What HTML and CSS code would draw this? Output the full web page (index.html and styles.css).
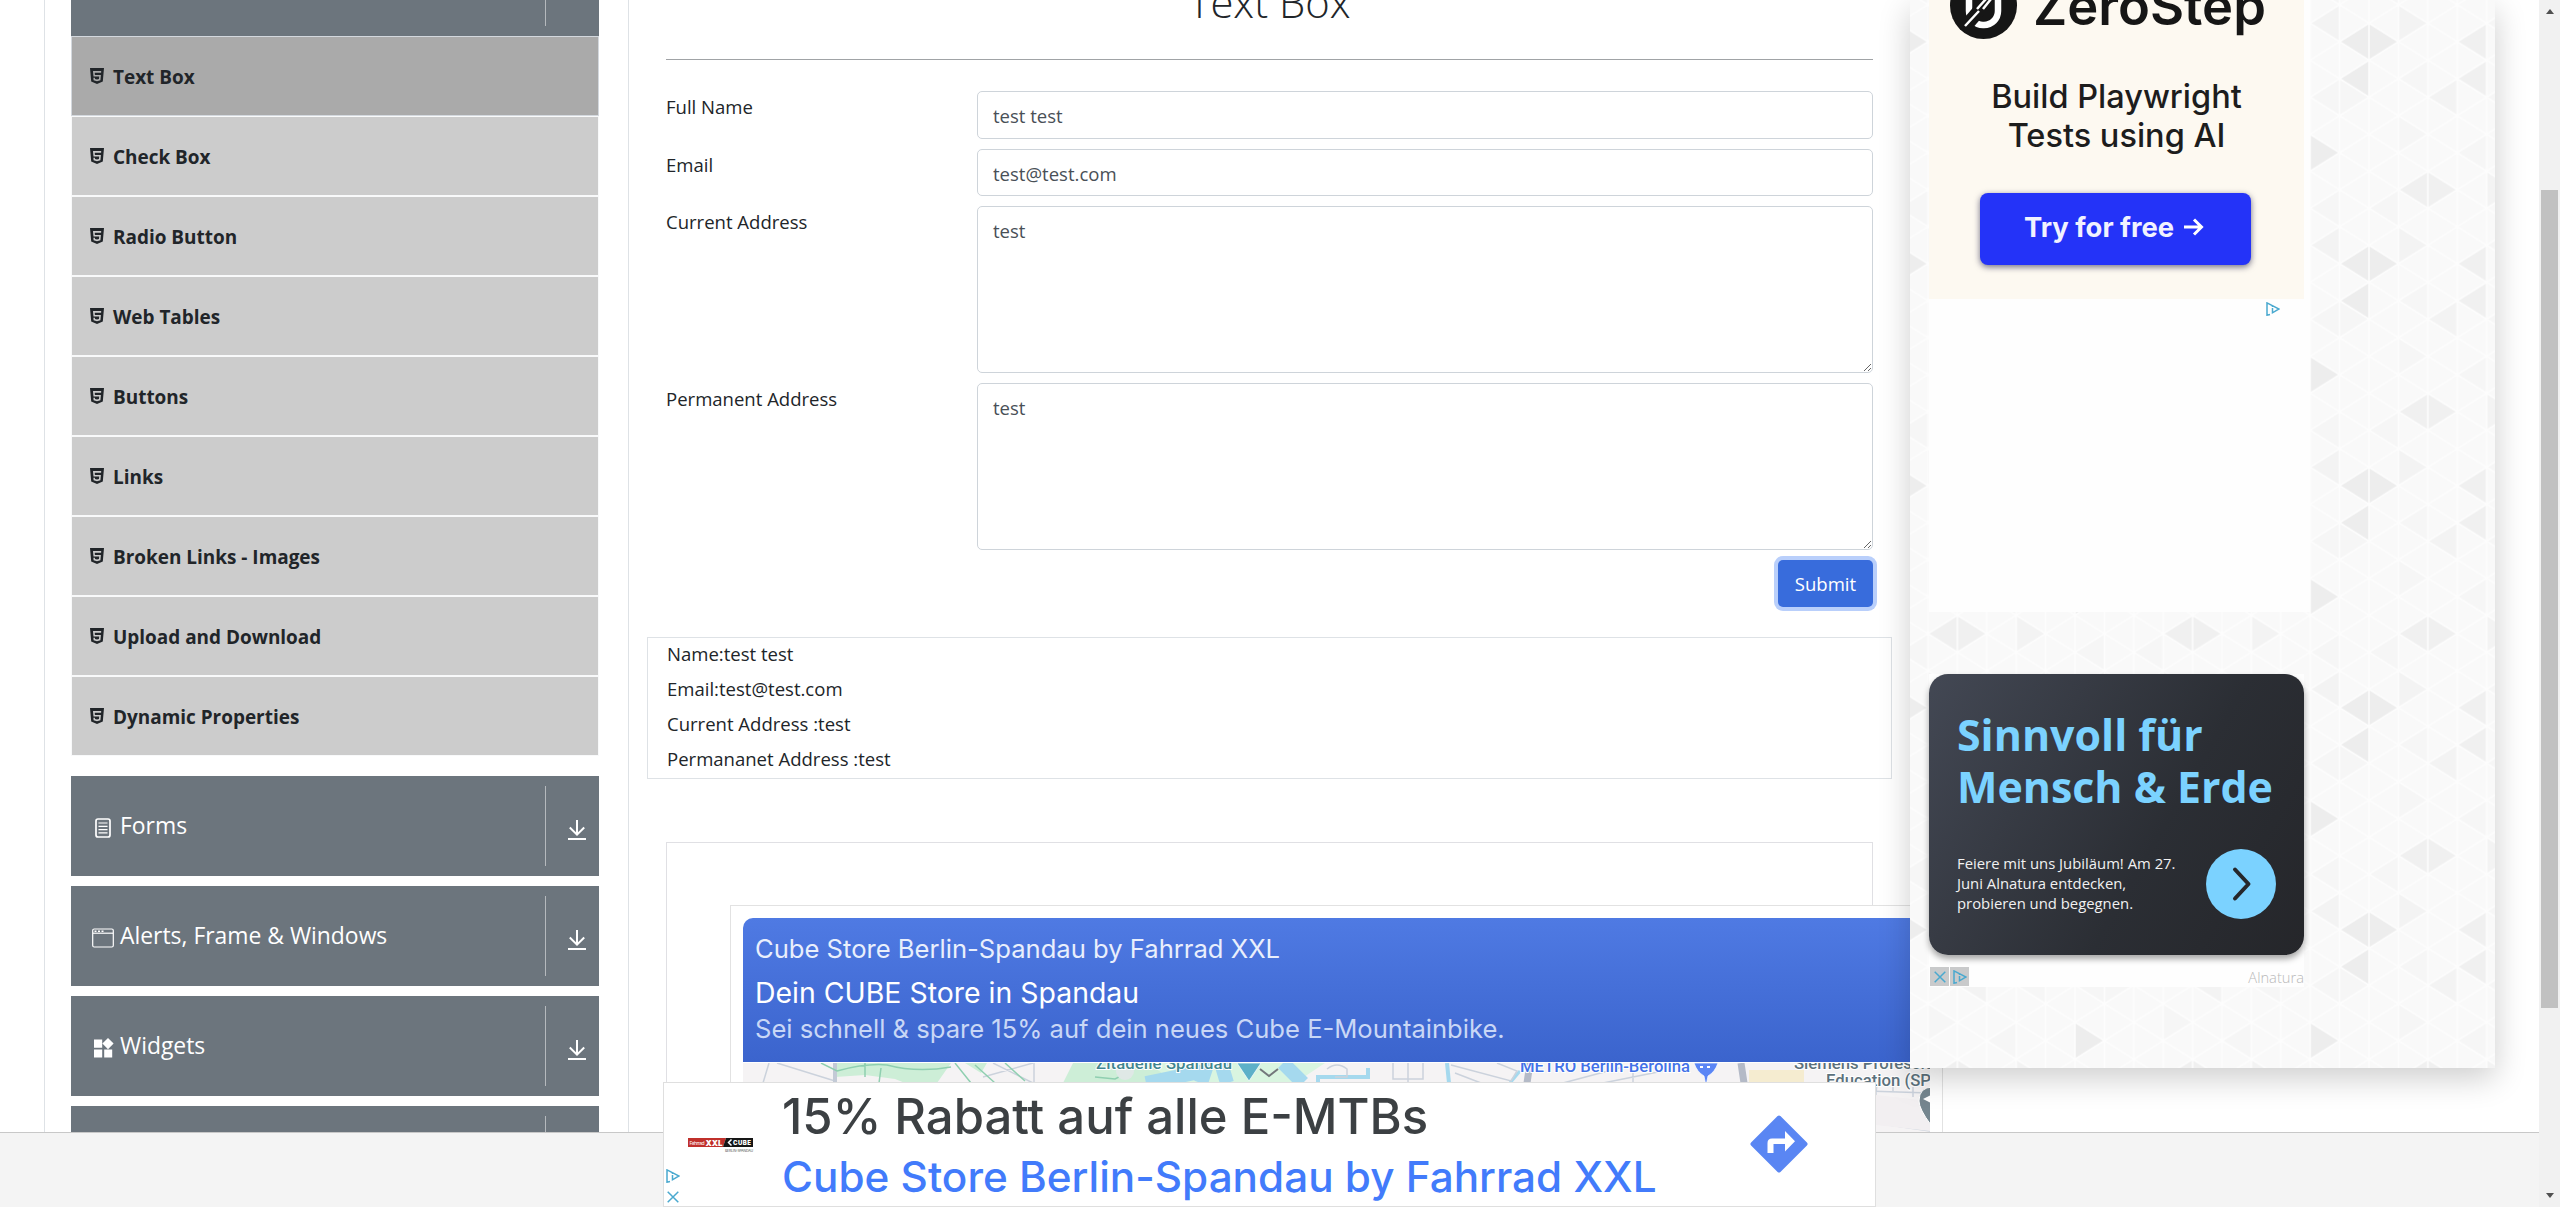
FILE: index.html
```html
<!DOCTYPE html>
<html lang="en">
<head>
<meta charset="utf-8">
<title>Text Box</title>
<link rel="stylesheet" href="styles.css">
</head>
<body>
<svg class="defs" width="0" height="0" aria-hidden="true">
  <symbol id="html5" viewBox="0 0 14 16"><path fill="currentColor" fill-rule="evenodd" d="M0 0h14l-1.2 13.6L7 16l-5.800-2.400zM3 3l.5 5.500h5.700l-.2 2.400-2 .6-2-.6-.1-1.200H3.400l.2 2.500L7 13.300l3.400-1.100.5-5.300H4.900L4.700 4.700h6.400L11.200 3z"/></symbol>
  <symbol id="down" viewBox="0 0 18 20"><path fill="none" stroke="currentColor" stroke-width="2" d="M9 0v14M1.800 7.500 9 14.700l7.200-7.200M0 19h18"/></symbol>
  <symbol id="choices" viewBox="0 0 14 14"><path fill="none" stroke="#4aa9cf" stroke-width="1.500" d="M4 12.500 1 13.200V.9L13 7 6.500 10.800V6M6.500 3.800v1.200"/></symbol>
  <symbol id="cross" viewBox="0 0 12 12"><path fill="none" stroke="#4aa9cf" stroke-width="1.500" d="m.7.7 10.600 10.600M11.300.7.7 11.300"/></symbol>
</svg>

<div class="page">
  <nav class="sidebar">
    <div class="group first"><span class="toggle"></span></div>
    <ul class="items">
      <li class="item active"><svg><use href="#html5"/></svg><span>Text Box</span></li>
      <li class="item"><svg><use href="#html5"/></svg><span>Check Box</span></li>
      <li class="item"><svg><use href="#html5"/></svg><span>Radio Button</span></li>
      <li class="item"><svg><use href="#html5"/></svg><span>Web Tables</span></li>
      <li class="item"><svg><use href="#html5"/></svg><span>Buttons</span></li>
      <li class="item"><svg><use href="#html5"/></svg><span>Links</span></li>
      <li class="item"><svg><use href="#html5"/></svg><span>Broken Links - Images</span></li>
      <li class="item"><svg><use href="#html5"/></svg><span>Upload and Download</span></li>
      <li class="item"><svg><use href="#html5"/></svg><span>Dynamic Properties</span></li>
    </ul>
    <div class="group">
      <svg class="gi" viewBox="0 0 22 22"><rect x="4" y="2" width="14" height="18" rx="2" fill="none" stroke="#fff" stroke-width="1.700"/><path stroke="#fff" stroke-width="1.200" d="M6.500 6h9M6.500 9.300h9M6.500 12.600h9M6.500 15.900h9"/></svg>
      <span class="label">Forms</span><span class="toggle"><svg><use href="#down"/></svg></span>
    </div>
    <div class="group">
      <svg class="gi" viewBox="0 0 22 22"><rect x=".7" y="2" width="20.600" height="18" rx="1.500" fill="none" stroke="#fff" stroke-width="1.200"/><path stroke="#fff" stroke-width="1.200" d="M1 6.200h20"/><path stroke="#fff" stroke-width="1.500" stroke-dasharray="2 1.500" d="M2.500 4.200h9"/></svg>
      <span class="label">Alerts, Frame &amp; Windows</span><span class="toggle"><svg><use href="#down"/></svg></span>
    </div>
    <div class="group">
      <svg class="gi" viewBox="0 0 22 22"><path fill="#fff" d="M2 2.500h8.200v8.200H2zM2 12.500h8.200v8H2zM12.200 12.500h8v8h-8zM16 1l5.600 5.600L16 12.200l-5.600-5.600z"/></svg>
      <span class="label">Widgets</span><span class="toggle"><svg><use href="#down"/></svg></span>
    </div>
    <div class="group"><span class="toggle"></span></div>
  </nav>

  <main class="main">
    <h1>Text Box</h1>
    <form class="form">
      <label for="name">Full Name</label><input id="name" class="name" value="test test">
      <label for="mail">Email</label><input id="mail" value="test@test.com">
      <label for="cur">Current Address</label><textarea id="cur">test</textarea>
      <label for="per">Permanent Address</label><textarea id="per">test</textarea>
      <button type="button">Submit</button>
    </form>
    <div class="output">
      <p>Name:test test</p>
      <p>Email:test@test.com</p>
      <p>Current Address :test</p>
      <p>Permananet Address :test</p>
    </div>
    <div class="slot">
      <div class="slot-inner">
        <div class="store">
          <p class="s1">Cube Store Berlin-Spandau by Fahrrad XXL</p>
          <p class="s2">Dein CUBE Store in Spandau</p>
          <p class="s3">Sei schnell &amp; spare 15% auf dein neues Cube E-Mountainbike.</p>
        </div>
        <svg class="map" width="1187" height="72" viewBox="0 0 1187 72">
          <rect width="1187" height="72" fill="#f5f3f4"/>
          <path fill="#cdeed7" d="M92 0h116l-14 20-22 4-20-8-30-4-30 2zM222 0h22l-6 10zM330 0h40l10 20h-60zM324 14l8 4-12 4z"/>
          <path fill="#d9f5e0" d="M400 0h182l-30 20H420z"/>
          <path fill="#cdeed7" d="M356 20q10-22 34-18 24-4 36 18z"/>
          <g fill="none" stroke="#a5d9ee" stroke-width="8"><path d="M403 20 462 8l-4 12M478 0l6 20M540 0l20 20" stroke-width="14"/><path d="M575 20v-6h50V5" stroke-width="4"/><path d="m704 0 2 20" stroke-width="4"/><path d="m767 20 10-12" stroke-width="3"/></g>
          <g fill="none" stroke="#cbd2dc" stroke-width="1.500"><path d="M26 0 20 20M34 0l58 18M250 0l40 20M240 14l50-14M291 0v20M650 0v16h30V0M665 0v20M584 6q10-8 20 0v8h-12M708 2l60 16 6-10-20-8M712 10l26 10M820 20l60-16M860 20l60-12M890 8v12"/></g>
          <path stroke="#c3cad6" stroke-width="4" d="M92 0v20"/>
          <path stroke="#b4bac7" stroke-width="7" d="m787 0-3 20M998 0l3 20"/>
          <g fill="none" stroke="#8fcfb0" stroke-width="1.500"><path d="M78 0 94 8q30-8 50-6 30 8 64 2M122 0v14M138 5l-2 15M212 0l16 20M232 2l20 18M262 0l20 18M352 14l20 2 16-8"/></g>
          <circle cx="382" cy="8" r="9" fill="#dfe8e6"/>
          <path fill="#f5ecd0" d="M1006 7h55v13h-55z"/>
          <path fill="#5db0c8" stroke="#fff" stroke-width=".7" d="M494 0h24l-12 18z"/>
          <path fill="none" stroke="#73777b" stroke-width="2" d="m517 6 9 7 9-7"/>
          <path fill="#5a85f5" stroke="#fff" stroke-width=".7" d="M951 0h24q-3 9-10 13l-2 10-2-10q-7-4-10-13z"/>
          <path fill="#fff" d="M957 3h3v2h-3zM964 3h3v2h-3z"/>
          <path fill="none" stroke="#cbd2dc" stroke-width="1.500" d="M1132 60 1187 68M1132 42l2-22M1060 26l127 4M1150 14v14M1170 24v10M1100 34l87 10"/>
          <path fill="#f2eff1" d="M1133 32 1187 38v30l-54-6z"/>
          <path fill="#75868f" stroke="#fff" d="M1190 24q-14 0-14 14 0 8 12 24z"/><path fill="#fff" d="m1180 36 10-5v10z"/>
          <g class="mapt">
            <text x="353" y="6" fill="#41868f" textLength="136">Zitadelle Spandau</text>
            <text x="777" y="8.500" fill="#4272e8" textLength="170">METRO Berlin-Berolina</text>
            <text x="1051" y="6" fill="#5c717c">Siemens Professional</text>
            <text x="1083" y="23" fill="#5c717c">Education (SPE)</text>
          </g>
        </svg>
      </div>
    </div>
  </main>

  <aside class="rail">
    <svg class="pattern" width="585" height="1068">
      <defs>
        <pattern id="tri" width="235.200" height="222" patternUnits="userSpaceOnUse" patternTransform="translate(106.200 4.700)">
          <rect width="235.200" height="222" fill="#f9f9f9"/>
          <path fill="#ededed" d="M88.200 37l29.400-18.500L147 37l-29.400 18.500zM88.200 148l-29.400-18.500v37zM88.200 74l29.400-18.500v37z"/>
          <path fill="#f0f0f0" d="M205.800 37l29.400-18.500v37zM205.800 74l29.400-18.500v37zM147 185l29.400-18.500 29.400 18.500-29.400 18.500z"/>
          <path fill="#f3f3f3" d="M176.400 92.500l29.400-18.500v37zM176.400 18.500L147 0v37zM29.400 185L0 166.500v37zM58.800 18.500l29.400-18.500v37z"/>
          <path fill="#f6f6f6" d="M0 92.500L29.400 74v37zM58.800 92.500L88.200 74l29.400 18.500L88.200 111zM176.400 129.500L147 111v37zM117.600 203.500l29.400-18.500v37zM205.800 148l29.400-18.500v37zM0 18.500L29.400 0v37zM147 74l29.400-18.500v37zM88.200 222l-29.400-18.500 29.400-18.500z"/>
          <path fill="none" stroke="#fdfdfd" stroke-width="1.600" d="M0 0v222M29.400 0v222M58.800 0v222M88.200 0v222M117.600 0v222M147 0v222M176.400 0v222M205.800 0v222M235.200 0v222
          M0 -129.500L235.200 18.500M0 -92.500L235.200 55.500M0 -55.500L235.200 92.500M0 -18.500L235.200 129.500M0 18.500L235.200 166.500M0 55.500L235.200 203.500M0 92.500L235.200 240.500M0 129.500L235.200 277.500M0 166.500L235.200 314.500M0 203.500L235.200 351.500
          M0 18.500L235.200 -129.500M0 55.500L235.200 -92.500M0 92.500L235.200 -55.500M0 129.500L235.200 -18.500M0 166.500L235.200 18.500M0 203.500L235.200 55.500M0 240.500L235.200 92.500M0 277.500L235.200 129.500M0 314.500L235.200 166.500M0 351.500L235.200 203.500"/>
        </pattern>
      </defs>
      <rect width="585" height="1068" fill="url(#tri)"/>
    </svg>
    <div class="zs-slot">
      <div class="zs">
        <div class="zs-brand">
          <svg width="67" height="67" viewBox="0 0 67 67"><circle cx="33.500" cy="33.500" r="33.500" fill="#161616"/><rect x="19" y="10" width="29" height="43" rx="14" fill="none" stroke="#fff" stroke-width="6.500"/><path stroke="#161616" stroke-width="13" d="m15 55 24-28"/><path stroke="#fff" stroke-width="2.500" d="m15 54 14-15M27 37l9-10M33 37l8-10"/></svg>
          <span>ZeroStep</span>
        </div>
        <p class="zs-text">Build Playwright<br>Tests using AI</p>
        <div class="zs-btn">Try for free <svg width="20" height="20" viewBox="0 0 20 20"><path fill="none" stroke="#fff" stroke-width="3" d="M0 10h17M10 2.500l7.500 7.500-7.500 7.500"/></svg></div>
      </div>
      <svg class="zs-choice" width="14" height="14"><use href="#choices"/></svg>
    </div>
    <div class="aln-slot">
      <div class="aln">
        <p class="aln-title">Sinnvoll für<br>Mensch &amp; Erde</p>
        <div class="aln-row">
          <p>Feiere mit uns Jubiläum! Am 27.<br>Juni Alnatura entdecken,<br>probieren und begegnen.</p>
          <svg width="70" height="70" viewBox="0 0 70 70"><circle cx="35" cy="35" r="35" fill="#7bd2ff"/><path fill="none" stroke="#25272b" stroke-width="4" stroke-linecap="round" stroke-linejoin="round" d="m29 20.500 13.500 14.500L29 49.500"/></svg>
        </div>
      </div>
      <div class="aln-foot">
        <span class="chip"><svg width="12" height="12"><use href="#cross"/></svg></span><span class="chip"><svg width="14" height="14"><use href="#choices"/></svg></span>
        <span class="adv">Alnatura</span>
      </div>
    </div>
  </aside>
</div>
<footer class="footer"></footer>

<div class="anchor">
  <div class="anchor-left">
    <svg class="logo" width="66" height="15" viewBox="0 0 66 15"><path fill="#c0302b" d="M0 0h38l-3 9H0z"/><path fill="#161616" d="M38 0h27v9H35z"/><text x="1.500" y="7" font-size="5" fill="#fff" textLength="15">Fahrrad</text><text x="17.500" y="7.500" font-size="8" font-weight="900" fill="#fff" textLength="17">XXL</text><text x="45" y="6.800" font-size="6" font-weight="900" fill="#fff" textLength="18">CUBE</text><path fill="none" stroke="#fff" stroke-width="1.500" d="m43.500 1.500-3 3 3 3"/><text x="37" y="13.500" font-size="3.500" fill="#555" textLength="28">BERLIN-SPANDAU</text></svg>
    <svg class="a1" width="14" height="14"><use href="#choices"/></svg>
    <svg class="a2" width="12" height="12"><use href="#cross"/></svg>
  </div>
  <div class="anchor-text">
    <p class="a-title">15% Rabatt auf alle E-MTBs</p>
    <p class="a-sub">Cube Store Berlin-Spandau by Fahrrad XXL</p>
  </div>
  <svg class="dir" width="58" height="58" viewBox="0 0 58 58"><path fill="#5a86f3" stroke="#5a86f3" stroke-width="4" stroke-linejoin="round" d="M29 2.500 55.500 29 29 55.500 2.500 29z"/><path fill="#fff" d="M17.500 38V28q0-4.500 4.500-4.500h13V16l10 10.300-10 10.200V29H23.500v9z"/></svg>
</div>

<div class="scroll"><i class="up"></i><i class="thumb"></i><i class="dn"></i></div>
</body>
</html>
```
FILE: styles.css
```css
* { box-sizing: border-box; margin: 0; padding: 0; }
html, body { height: 1207px; overflow: hidden; background: #fff; }
body { position: relative; font: 18.55px/30px "Open Sans", "Noto Sans", sans-serif; color: #212529; }
svg { display: block; flex: none; }
.defs { position: absolute; }
.page { display: flex; height: 1132px; overflow: hidden; align-items: flex-start; }

/* sidebar */
.sidebar { flex: none; width: 585px; height: 1132px; margin-left: 44px; padding: 0 29px 0 26px; border: solid #dee2e6; border-width: 0 1px; overflow: hidden; }
.group { display: flex; align-items: center; height: 100px; margin-bottom: 10px; padding-left: 21px; background: #6c757d; color: #fff; font-size: 22.9px; }
.group.first { height: 36px; margin: 0; align-items: flex-start; }
.group.first .toggle { height: 26px; }
.gi { width: 22px; height: 22px; margin-top: 4px; }
.label { margin: 0 0 0 6px; }
.toggle { display: flex; align-items: center; width: 54px; height: 80px; margin-left: auto; padding: 7px 0 0 22px; border-left: 1px solid #b5b9bd; }
.toggle svg { width: 18px; height: 20px; }
.items { list-style: none; margin-bottom: 20px; }
.item { display: flex; align-items: center; height: 80px; padding-left: 18px; border: 1px solid #f8f9fa; background: #ccc; font-size: 18.95px; font-weight: 700; }
.item.active { background: #aaa; border-color: #d3d8de; }
.item svg { width: 14px; height: 16px; margin-right: 9px; }
.item span { padding-top: 2px; }

/* form */
.main { flex: none; width: 1281px; padding-left: 37px; }
h1 { width: 1207px; height: 82px; margin-top: -23px; font-size: 41.8px; font-weight: 300; line-height: 49px; text-align: center; }
.form { display: grid; grid-template-columns: 311px 896px; grid-template-rows: 48px 47px 167px 167px 47px; row-gap: 10px; width: 1207px; padding-top: 31px; border-top: 1px solid #a0a3a6; }
label { padding-top: 1px; }
input, textarea { width: 100%; height: 100%; padding: 9px 15px; border: 1px solid #ced4da; border-radius: 5px; background: #fff; color: #495057; font: inherit; outline: 0; }
input { padding-top: 11px; }
input.name { padding-top: 9px; }
textarea { display: block; resize: vertical; }
button { grid-column: 2; justify-self: end; width: 95px; padding-top: 1px; border: 0; border-radius: 5px; background: #386cdc; color: #fff; font: inherit; box-shadow: 0 0 0 4px #b9cffb; }
.output { width: 1245px; height: 142px; margin: 30px 0 63px -19px; padding: .5px 0 0 19px; border: 1px solid #dee2e6; }
.output p { height: 35px; }

/* map ad */
.slot { width: 1207px; height: 400px; padding: 62px 0 0 63px; border: 1px solid #e0e0e4; }
.slot-inner { width: 1213px; height: 400px; padding: 12px; border: 1px solid #e2e2e2; background: #fff; }
.store { width: 1187px; height: 144px; margin-bottom: 1px; padding: 11px 0 0 12px; border-radius: 10px 10px 0 0; background: linear-gradient(#4f7ae3, #3b64cd); color: #fff; font-family: Inter, sans-serif; white-space: nowrap; }
.s1 { margin-bottom: 4px; font-size: 25.6px; line-height: 40px; color: #e9effc; }
.s2 { font-size: 28.45px; line-height: 40px; }
.s3 { font-size: 25.58px; line-height: 32px; color: #c9d7f6; }
.mapt { font: 500 16.7px Roboto, sans-serif; stroke: #fff; stroke-width: 2px; paint-order: stroke; }

/* right rail */
.rail { position: relative; flex: none; width: 585px; height: 1068px; padding-left: 19px; background: #fafafa; box-shadow: 0 10px 30px rgba(0, 0, 0, .2); }
.pattern { position: absolute; left: 0; top: 0; }
.zs-slot { position: relative; width: 381px; height: 612px; margin-bottom: 62px; background: #fefefe; }
.zs { width: 375px; height: 299px; padding: 1px 0 0; background: #fdf9f1; color: #1d1d1d; font-family: Inter, sans-serif; overflow: hidden; }
.zs-brand { display: flex; align-items: center; gap: 16px; margin: -29px 0 38px 21px; font-size: 52.5px; font-weight: 600; line-height: 60px; color: #161616; }
.zs-brand span { margin-top: 0; }
.zs-text { font-size: 32.5px; font-weight: 500; line-height: 39px; text-align: center; }
.zs-btn { display: flex; align-items: center; gap: 10px; width: 271px; height: 72px; margin: 38px 0 0 51px; padding: 0 0 4px 44px; border-radius: 8px; background: #2433f8; color: #f1f2ff; font-size: 27.4px; font-weight: 700; box-shadow: 0 2px 6px rgba(20, 20, 60, .6); }
.zs-choice { margin: 3px 0 0 337px; }
.aln-slot { position: relative; width: 375px; height: 313px; background: #fefefe; }
.aln { height: 281px; padding: 35px 28px 0 28px; border-radius: 19px; background: linear-gradient(120deg, #434854, #2b2e34 60%, #25262a); box-shadow: 0 4px 6px rgba(0, 0, 0, .35); }
.aln-title { margin-bottom: 36px; color: #7bd2ff; font-size: 42.9px; font-weight: 700; line-height: 52px; white-space: nowrap; }
.aln-row { display: flex; align-items: center; justify-content: space-between; color: #f1f1f1; font-size: 14.85px; line-height: 19.8px; white-space: nowrap; }
.aln-foot { display: flex; align-items: center; gap: 1px; height: 32px; padding: 11px 0 0 1px; }
.chip { display: flex; align-items: center; justify-content: center; width: 19px; height: 19px; background: #c9cacb; }
.adv { margin-left: auto; color: #b9b9b9; font-size: 14.7px; font-weight: 300; }

/* bottom bar and sticky ad */
.footer { height: 75px; border-top: 1px solid #c8c8c8; background: #f4f4f4; }
.anchor { position: absolute; left: 663px; top: 1082px; display: flex; width: 1213px; height: 125px; border: 1px solid #dfdfdf; background: #fff; font-family: Inter, sans-serif; white-space: nowrap; }
.anchor-left { display: grid; grid-template-rows: 86px 22px 1fr; width: 118px; }
.logo { margin: 55px 0 0 24px; font-family: Inter, sans-serif; }
.a1 { margin-left: 2px; }
.a2 { margin-left: 3px; }
.anchor-text { width: 968px; padding-top: 4px; }
.a-title { color: #3c4043; font-size: 49px; font-weight: 500; line-height: 60px; }
.a-sub { margin-top: 3px; color: #427bfb; font-size: 42.25px; font-weight: 500; line-height: 54px; }
.dir { margin-top: 32px; }

/* scrollbar */
.scroll { position: absolute; right: 0; top: 0; display: flex; flex-direction: column; align-items: center; justify-content: space-between; width: 21px; height: 1207px; padding: 9px 0; background: #f1f1f1; }
.thumb { width: 17px; height: 818px; margin: 176px 0 auto; background: #c1c1c1; }
.up, .dn { border: solid transparent; border-width: 0 4.500px 5px; border-bottom-color: #505050; }
.dn { border-width: 5px 4.500px 0; border-top-color: #505050; }
```
